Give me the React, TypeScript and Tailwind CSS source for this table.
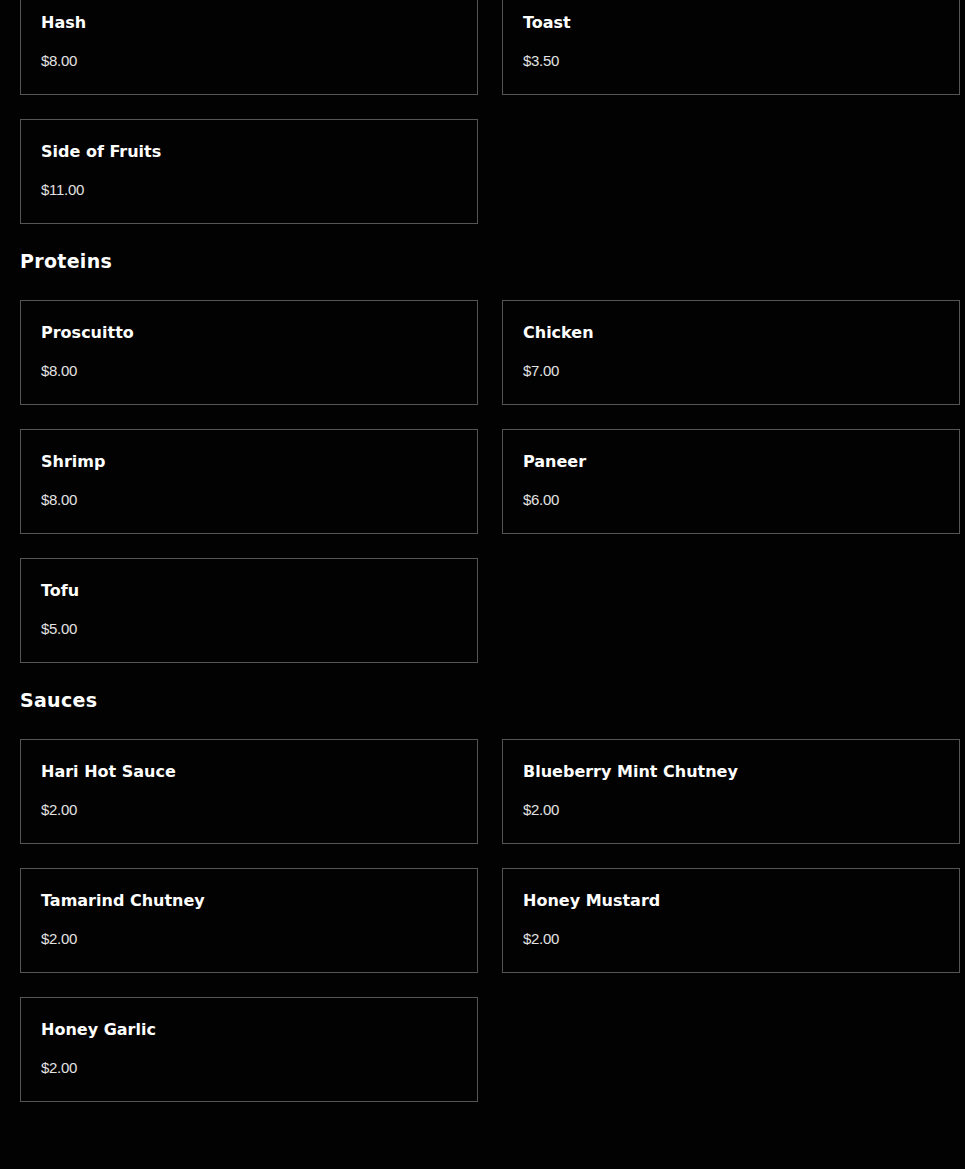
import React from "react";

type Item = { name: string; price: string };

const sections: { title?: string; items: Item[] }[] = [
  {
    items: [
      { name: "Hash", price: "$8.00" },
      { name: "Toast", price: "$3.50" },
      { name: "Side of Fruits", price: "$11.00" },
    ],
  },
  {
    title: "Proteins",
    items: [
      { name: "Proscuitto", price: "$8.00" },
      { name: "Chicken", price: "$7.00" },
      { name: "Shrimp", price: "$8.00" },
      { name: "Paneer", price: "$6.00" },
      { name: "Tofu", price: "$5.00" },
    ],
  },
  {
    title: "Sauces",
    items: [
      { name: "Hari Hot Sauce", price: "$2.00" },
      { name: "Blueberry Mint Chutney", price: "$2.00" },
      { name: "Tamarind Chutney", price: "$2.00" },
      { name: "Honey Mustard", price: "$2.00" },
      { name: "Honey Garlic", price: "$2.00" },
    ],
  },
];

function Card({ item }: { item: Item }) {
  return (
    <div className="border border-[#555] px-[20px] pt-[20px] pb-[23px]">
      <div className="h-[24px] text-[16px] leading-[24px] font-bold text-white font-['DejaVu_Sans',sans-serif]">
        {item.name}
      </div>
      <div className="mt-[16px] h-[20px] text-[15px] leading-[20px] tracking-[-0.3px] text-[#e2e2e2] font-['Liberation_Sans',Arial,sans-serif]">
        {item.price}
      </div>
    </div>
  );
}

export default function App() {
  return (
    <div className="min-h-[1169px] bg-[#020202] overflow-hidden">
      <div className="ml-[20px] w-[940px] -mt-[10px] pb-[60px]">
        {sections.map((s, i) => (
          <div key={i}>
            {s.title && (
              <h2 className="mt-[23px] mb-[25px] h-[28px] text-[19px] leading-[28px] tracking-[0.3px] font-bold text-white font-['DejaVu_Sans',sans-serif]">
                {s.title}
              </h2>
            )}
            <div className="grid grid-cols-2 gap-6">
              {s.items.map((it) => (
                <Card key={it.name} item={it} />
              ))}
            </div>
          </div>
        ))}
      </div>
    </div>
  );
}
